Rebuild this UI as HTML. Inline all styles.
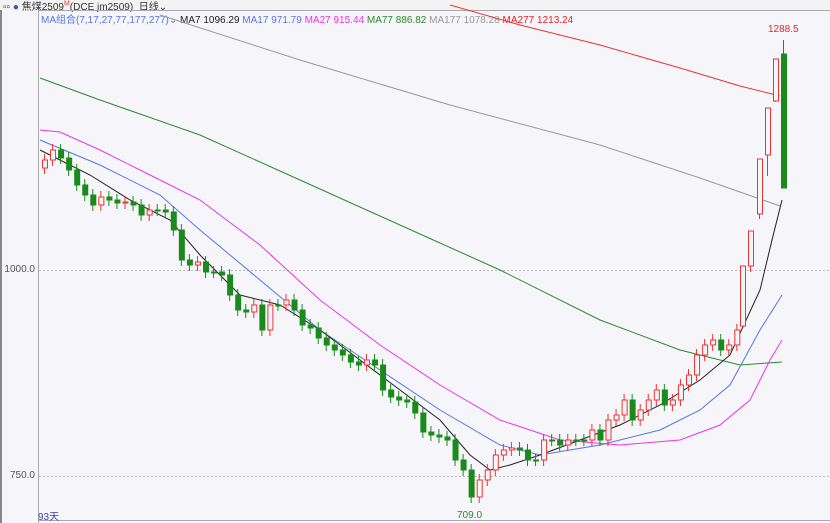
<!DOCTYPE html>
<html><head><meta charset="utf-8"><style>
html,body{margin:0;padding:0;width:830px;height:523px;overflow:hidden;background:#f5f5fa;font-family:"Liberation Sans","Noto Sans CJK SC",sans-serif}
.t{position:absolute;font-size:10px;white-space:nowrap}
</style></head><body>
<div style="position:absolute;left:0;top:0;width:830px;height:10px;background:#f3f3f3"></div>
<div class="t" style="left:3px;top:-2px;color:#333">▫▫ <span style="color:#2a5db0">●</span> 焦煤2509<sup style="color:#e33;font-size:7px">M</sup>(DCE jm2509) &nbsp;日线⌄</div>
<div style="position:absolute;left:0;top:10px;width:2px;height:513px;background:#888"></div>
<div style="position:absolute;left:38px;top:10px;width:1px;height:513px;background:#aaa"></div>
<div style="position:absolute;left:38px;top:10px;width:792px;height:1px;background:#aaa"></div>
<div style="position:absolute;left:38px;top:520px;width:792px;height:1px;background:#aaa"></div>
<div class="t" style="left:41px;top:11px;"><span style="color:#5577dd">MA组合(7,17,27,77,177,277)⌄</span> <span style="color:#222">MA7 1096.29</span> <span style="color:#5577dd">MA17 971.79</span> <span style="color:#ee33ee">MA27 915.44</span> <span style="color:#2a8a2a">MA77 886.82</span> <span style="color:#999">MA177 1078.28</span> <span style="color:#ee2222">MA277 1213.24</span></div>
<div class="t" style="right:795px;top:264px;color:#555">1000.0</div>
<div class="t" style="right:795px;top:470px;color:#555">750.0</div>
<div class="t" style="left:38px;top:508px;color:#4444aa">93天</div>
<div class="t" style="left:457px;top:510px;color:#2a8a2a">709.0</div>
<div class="t" style="left:768px;top:24px;color:#ee2222">1288.5</div>
<svg id="s" width="830" height="523" style="position:absolute;left:0;top:0">
<line x1="39" y1="270.5" x2="830" y2="270.5" stroke="#bbb" stroke-dasharray="2,2"/>
<line x1="39" y1="476.5" x2="830" y2="476.5" stroke="#bbb" stroke-dasharray="2,2"/>
<g fill="none" stroke-width="1">
<polyline stroke="#e33" points="450,5 520,25 600,45 680,68 740,86 780,96"/>
<polyline stroke="#999" points="160,15 300,60 450,105 600,145 700,178 780,206"/>
<polyline stroke="#2a8a2a" points="40,78 100,100 200,135 300,180 400,225 500,270 600,320 680,350 740,365 782,362"/>
<polyline stroke="#ee33ee" points="40,130 60,132 100,150 150,175 200,200 260,245 320,300 380,345 440,385 500,420 560,440 620,445 680,440 720,425 750,400 770,360 782,340"/>
<polyline stroke="#5577dd" points="40,140 100,165 160,195 200,230 260,280 320,330 380,370 440,410 500,445 540,455 600,445 660,430 700,410 730,385 760,330 782,295"/>
<polyline stroke="#222" points="40,150 90,175 130,200 170,220 200,255 240,295 280,305 320,330 360,360 400,390 440,420 470,455 490,470 510,465 540,455 580,440 620,425 660,405 700,380 730,355 760,290 772,240 782,200"/>
</g>
<g id="c"></g>
</svg>
<script>
var c=[160,150,158,170,185,195,205,197,200,203,202,205,215,210,210,212,230,260,265,262,272,272,275,295,310,312,305,330,305,305,300,310,325,328,338,345,350,355,362,365,360,365,390,397,400,402,413,432,435,437,440,460,470,497,480,470,455,450,448,450,460,460,440,440,445,440,440,440,430,440,420,415,400,420,410,400,390,405,400,385,375,355,345,340,350,345,330];
var g=document.getElementById('c'),h='',p=168;
function cd(x,o,cl,hi,lo){var up=cl<o,t=Math.min(o,cl),b=Math.max(o,cl);if(b-t<1)b=t+1;
var col=up?'#e33':'#1a8a1a';
h+='<line x1="'+(x+2.5)+'" y1="'+hi+'" x2="'+(x+2.5)+'" y2="'+lo+'" stroke="'+col+'"/>';
h+='<rect x="'+(x+0.5)+'" y="'+t+'" width="5" height="'+(b-t)+'" stroke="'+col+'" fill="'+(up?'#f5f5fa':col)+'"/>';}
for(var i=0;i<c.length;i++){var x=42+i*8.05,o=p,cl=c[i];cd(x,o,cl,Math.min(o,cl)-6,Math.max(o,cl)+6);p=cl;}
var L=[[740,326,266,266,326],[748,266,231,231,272],[757,214,159,159,219],[765,155,108,108,176],[773,101,59,59,102],[781,54,188,40,188]];
L.forEach(function(a){cd(a[0],a[1],a[2],a[3],a[4]);});
g.innerHTML=h;
</script>
</body></html>
